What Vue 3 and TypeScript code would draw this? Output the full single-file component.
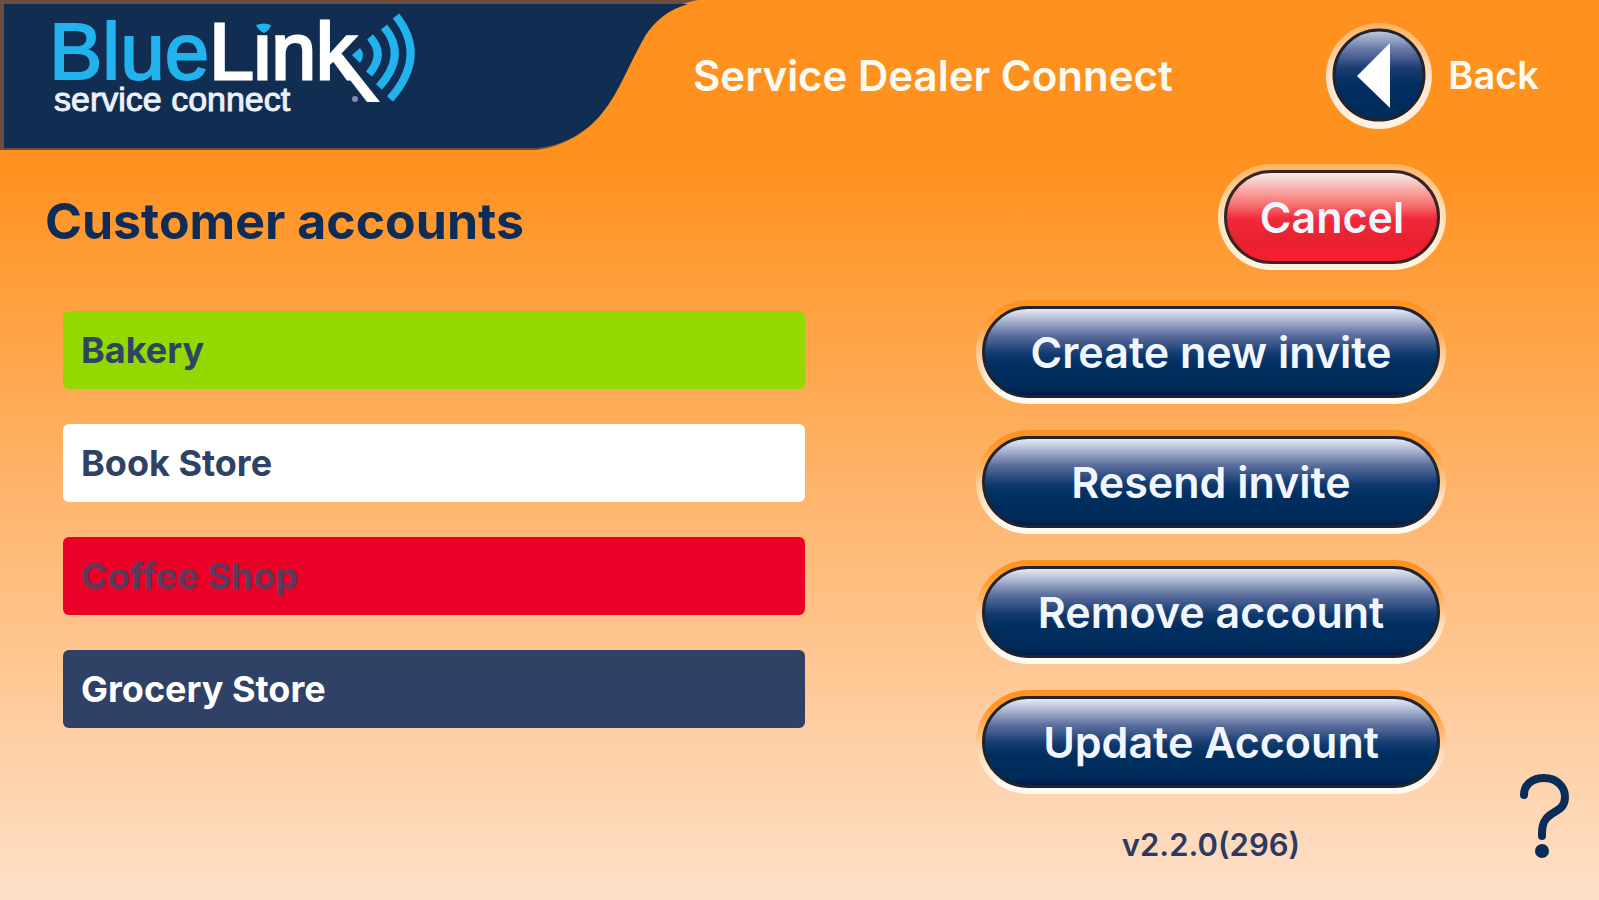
<script setup lang="ts">
import { ref } from 'vue'

interface Account {
  name: string
  tone: 'green' | 'white' | 'red' | 'navy'
}

const accounts: Account[] = [
  { name: 'Bakery', tone: 'green' },
  { name: 'Book Store', tone: 'white' },
  { name: 'Coffee Shop', tone: 'red' },
  { name: 'Grocery Store', tone: 'navy' },
]

const actions: string[] = ['Create new invite', 'Resend invite', 'Remove account', 'Update Account']

const selected = ref<string>('Grocery Store')
</script>

<template>
  <div class="screen">
    <header class="header">
      <svg class="brand" viewBox="0 0 700 150" role="img" aria-label="BlueLink service connect">
        <path class="brand-edge" d="M0 0H698C674 5 658 15 646 34C628 66 619 92 603 112C587 133 562 147 536 150H0Z" />
        <path class="brand-panel" d="M4 4H688C668 10 656 20 645 36C627 68 618 94 602 113C586 133 562 146 536 148H4Z" />
        <text class="logo-text" x="49" y="79"><tspan class="logo-blue">Blue</tspan><tspan class="logo-white">Link</tspan></text>
        <path class="dot-cover" d="M253 18H274V34H253Z" />
        <path class="cyan-fill" d="M256 25Q264 22 271 25Q270 30 264 33Q258 30 256 25Z" />
        <path class="k-leg" d="M330 54L342 54L380 102L367 102Z" />
        <circle class="k-mark" cx="355" cy="99" r="3" />
        <path class="cyan-fill" d="M352 55L360 48Q366 55 360 63Z" />
        <path class="wave" d="M370 37Q386 54 369 74" />
        <path class="wave" d="M384 27Q408 55 379 87" />
        <path class="wave" d="M396 16Q428 56 390 99" />
        <text class="logo-sub" x="54" y="111">service connect</text>
      </svg>
      <h1 class="title">Service Dealer Connect</h1>
      <button class="back" type="button">
        <svg class="back-icon" viewBox="0 0 110 110" aria-hidden="true">
          <defs>
            <linearGradient id="back-ring" x1="0" y1="0" x2="0" y2="1">
              <stop offset="0" stop-color="#ffb060" />
              <stop offset="0.5" stop-color="#ffe3c6" />
              <stop offset="1" stop-color="#fff4e6" />
            </linearGradient>
            <linearGradient id="back-face" x1="0" y1="0" x2="0" y2="1">
              <stop offset="0" stop-color="#c3cbe0" />
              <stop offset="0.2" stop-color="#6c7eaa" />
              <stop offset="0.42" stop-color="#1d3d73" />
              <stop offset="0.6" stop-color="#002f60" />
              <stop offset="1" stop-color="#002b5b" />
            </linearGradient>
          </defs>
          <circle cx="55" cy="56" r="53" fill="url(#back-ring)" />
          <circle cx="55" cy="55" r="45" fill="url(#back-face)" stroke="#20242e" stroke-width="3" />
          <path d="M33 56L66 23V88Z" fill="#fff" />
        </svg>
        <span>Back</span>
      </button>
    </header>

    <section class="heading-row">
      <h2 class="heading">Customer accounts</h2>
      <button class="pill pill-cancel" type="button"><span class="face">Cancel</span></button>
    </section>

    <main class="content">
      <ul class="accounts">
        <li v-for="account in accounts" :key="account.name">
          <button
            type="button"
            class="account"
            :class="account.tone"
            :aria-pressed="selected === account.name"
            @click="selected = account.name"
          >
            {{ account.name }}
          </button>
        </li>
      </ul>
      <div class="actions">
        <button v-for="action in actions" :key="action" class="pill" type="button">
          <span class="face">{{ action }}</span>
        </button>
        <p class="version">v2.2.0(296)</p>
      </div>
      <button class="help" type="button" aria-label="Help">
        <svg viewBox="0 0 60 96" aria-hidden="true">
          <path d="M9 28C9 17 18 11 29 11C41 11 50 19 50 30C50 49 27 41 27 66V69" />
          <circle cx="27" cy="84" r="7" />
        </svg>
      </button>
    </main>
  </div>
</template>

<style>
body {
  margin: 0;
}
</style>

<style scoped>
.screen {
  display: flex;
  flex-direction: column;
  box-sizing: border-box;
  min-height: 100vh;
  background: linear-gradient(to bottom, #ff911e 0, #ff911e 160px, #fee0c9 100%);
  font-family: Inter, "Liberation Sans", sans-serif;
  color: #0f2c57;
}

button {
  margin: 0;
  padding: 0;
  border: 0;
  background: none;
  font: inherit;
  color: inherit;
  cursor: pointer;
}

.header {
  display: flex;
  align-items: center;
  height: 150px;
  padding-right: 60px;
  color: #fffaf2;
}

.brand {
  flex: none;
  width: 700px;
  height: 150px;
}

.brand-edge {
  fill: #6a4f40;
}

.brand-panel {
  fill: #112e52;
}

.logo-text {
  font-family: "Liberation Sans", Arial, sans-serif;
  font-size: 80px;
}

.logo-blue {
  fill: #22b3ee;
  stroke: #22b3ee;
  stroke-width: 2;
}

.logo-white {
  fill: #fff;
  stroke: #fff;
  stroke-width: 3;
}

.logo-sub {
  font-family: "Liberation Sans", Arial, sans-serif;
  font-size: 34px;
  fill: #eaf1fa;
  stroke: #eaf1fa;
  stroke-width: 1;
}

.dot-cover {
  fill: #112e52;
}

.cyan-fill {
  fill: #22b3ee;
}

.k-leg {
  fill: #fff;
}

.k-mark {
  fill: #8090a8;
}

.wave {
  fill: none;
  stroke: #22b3ee;
  stroke-width: 8;
}

.title {
  margin: 2px auto 0 -7px;
  font-size: 42px;
  font-weight: 600;
  line-height: 52px;
  white-space: nowrap;
}

.back {
  display: flex;
  align-items: center;
  gap: 14px;
  font-size: 38px;
  font-weight: 600;
}

.back-icon {
  width: 110px;
  height: 110px;
}

.heading-row {
  display: flex;
  align-items: center;
  justify-content: space-between;
  padding: 14px 153px 0 45px;
}

.heading {
  margin: 8px 0 0;
  font-size: 50px;
  font-weight: 700;
  line-height: 60px;
}

.pill {
  display: block;
  padding: 6px;
  border-radius: 54px;
  background: linear-gradient(to bottom, #ff911e 0%, #ff9a30 20%, #ffd9b3 60%, #fffaf2 90%);
  color: #f2f6ff;
  font-size: 43px;
  font-weight: 600;
}

.face {
  display: flex;
  align-items: center;
  justify-content: center;
  box-sizing: border-box;
  height: 92px;
  border: 3px solid #20242e;
  border-radius: 46px;
  background: linear-gradient(to bottom, #e6ebf8 0%, #c3cbdf 8%, #5d709f 30%, #123a70 52%, #002f60 65%, #002b5b 92%, #001c48 100%);
}

.pill-cancel {
  width: 228px;
  background: linear-gradient(to bottom, #ffb464 0%, #ffe0bd 45%, #fff4e2 100%);
}

.pill-cancel .face {
  height: 94px;
  border-color: #3a2424;
  border-radius: 47px;
  background: linear-gradient(to bottom, #f4eeee 0%, #f9bcb8 14%, #f66a68 38%, #f3283c 52%, #e8222e 75%, #f81c30 100%);
}

.content {
  display: grid;
  grid-template-columns: minmax(0, 1fr) 470px 153px;
  padding: 30px 0 37px 63px;
}

.accounts {
  display: flex;
  flex-direction: column;
  gap: 35px;
  margin: 11px 171px 0 0;
  padding: 0;
  list-style: none;
}

.account {
  display: block;
  box-sizing: border-box;
  width: 100%;
  height: 78px;
  padding: 0 18px;
  border-radius: 6px;
  font-size: 36px;
  font-weight: 700;
  text-align: left;
}

.green {
  background: #93d800;
  color: #2f4464;
}

.white {
  background: #fff;
  color: #2f4266;
}

.red {
  background: #eb0028;
  color: #5c3a5c;
}

.navy {
  background: #2f4266;
  color: #fff;
}

.actions {
  display: flex;
  flex-direction: column;
  gap: 26px;
}

.version {
  margin: 7px 0 0;
  font-size: 31px;
  font-weight: 600;
  line-height: 36px;
  text-align: center;
  color: #2b3a62;
}

.help {
  align-self: end;
  justify-self: end;
  width: 60px;
  height: 96px;
  margin-right: 24px;
}

.help svg {
  display: block;
  width: 60px;
  height: 96px;
  fill: #0a2d57;
}

.help path {
  fill: none;
  stroke: #0a2d57;
  stroke-width: 8;
  stroke-linecap: round;
}
</style>
